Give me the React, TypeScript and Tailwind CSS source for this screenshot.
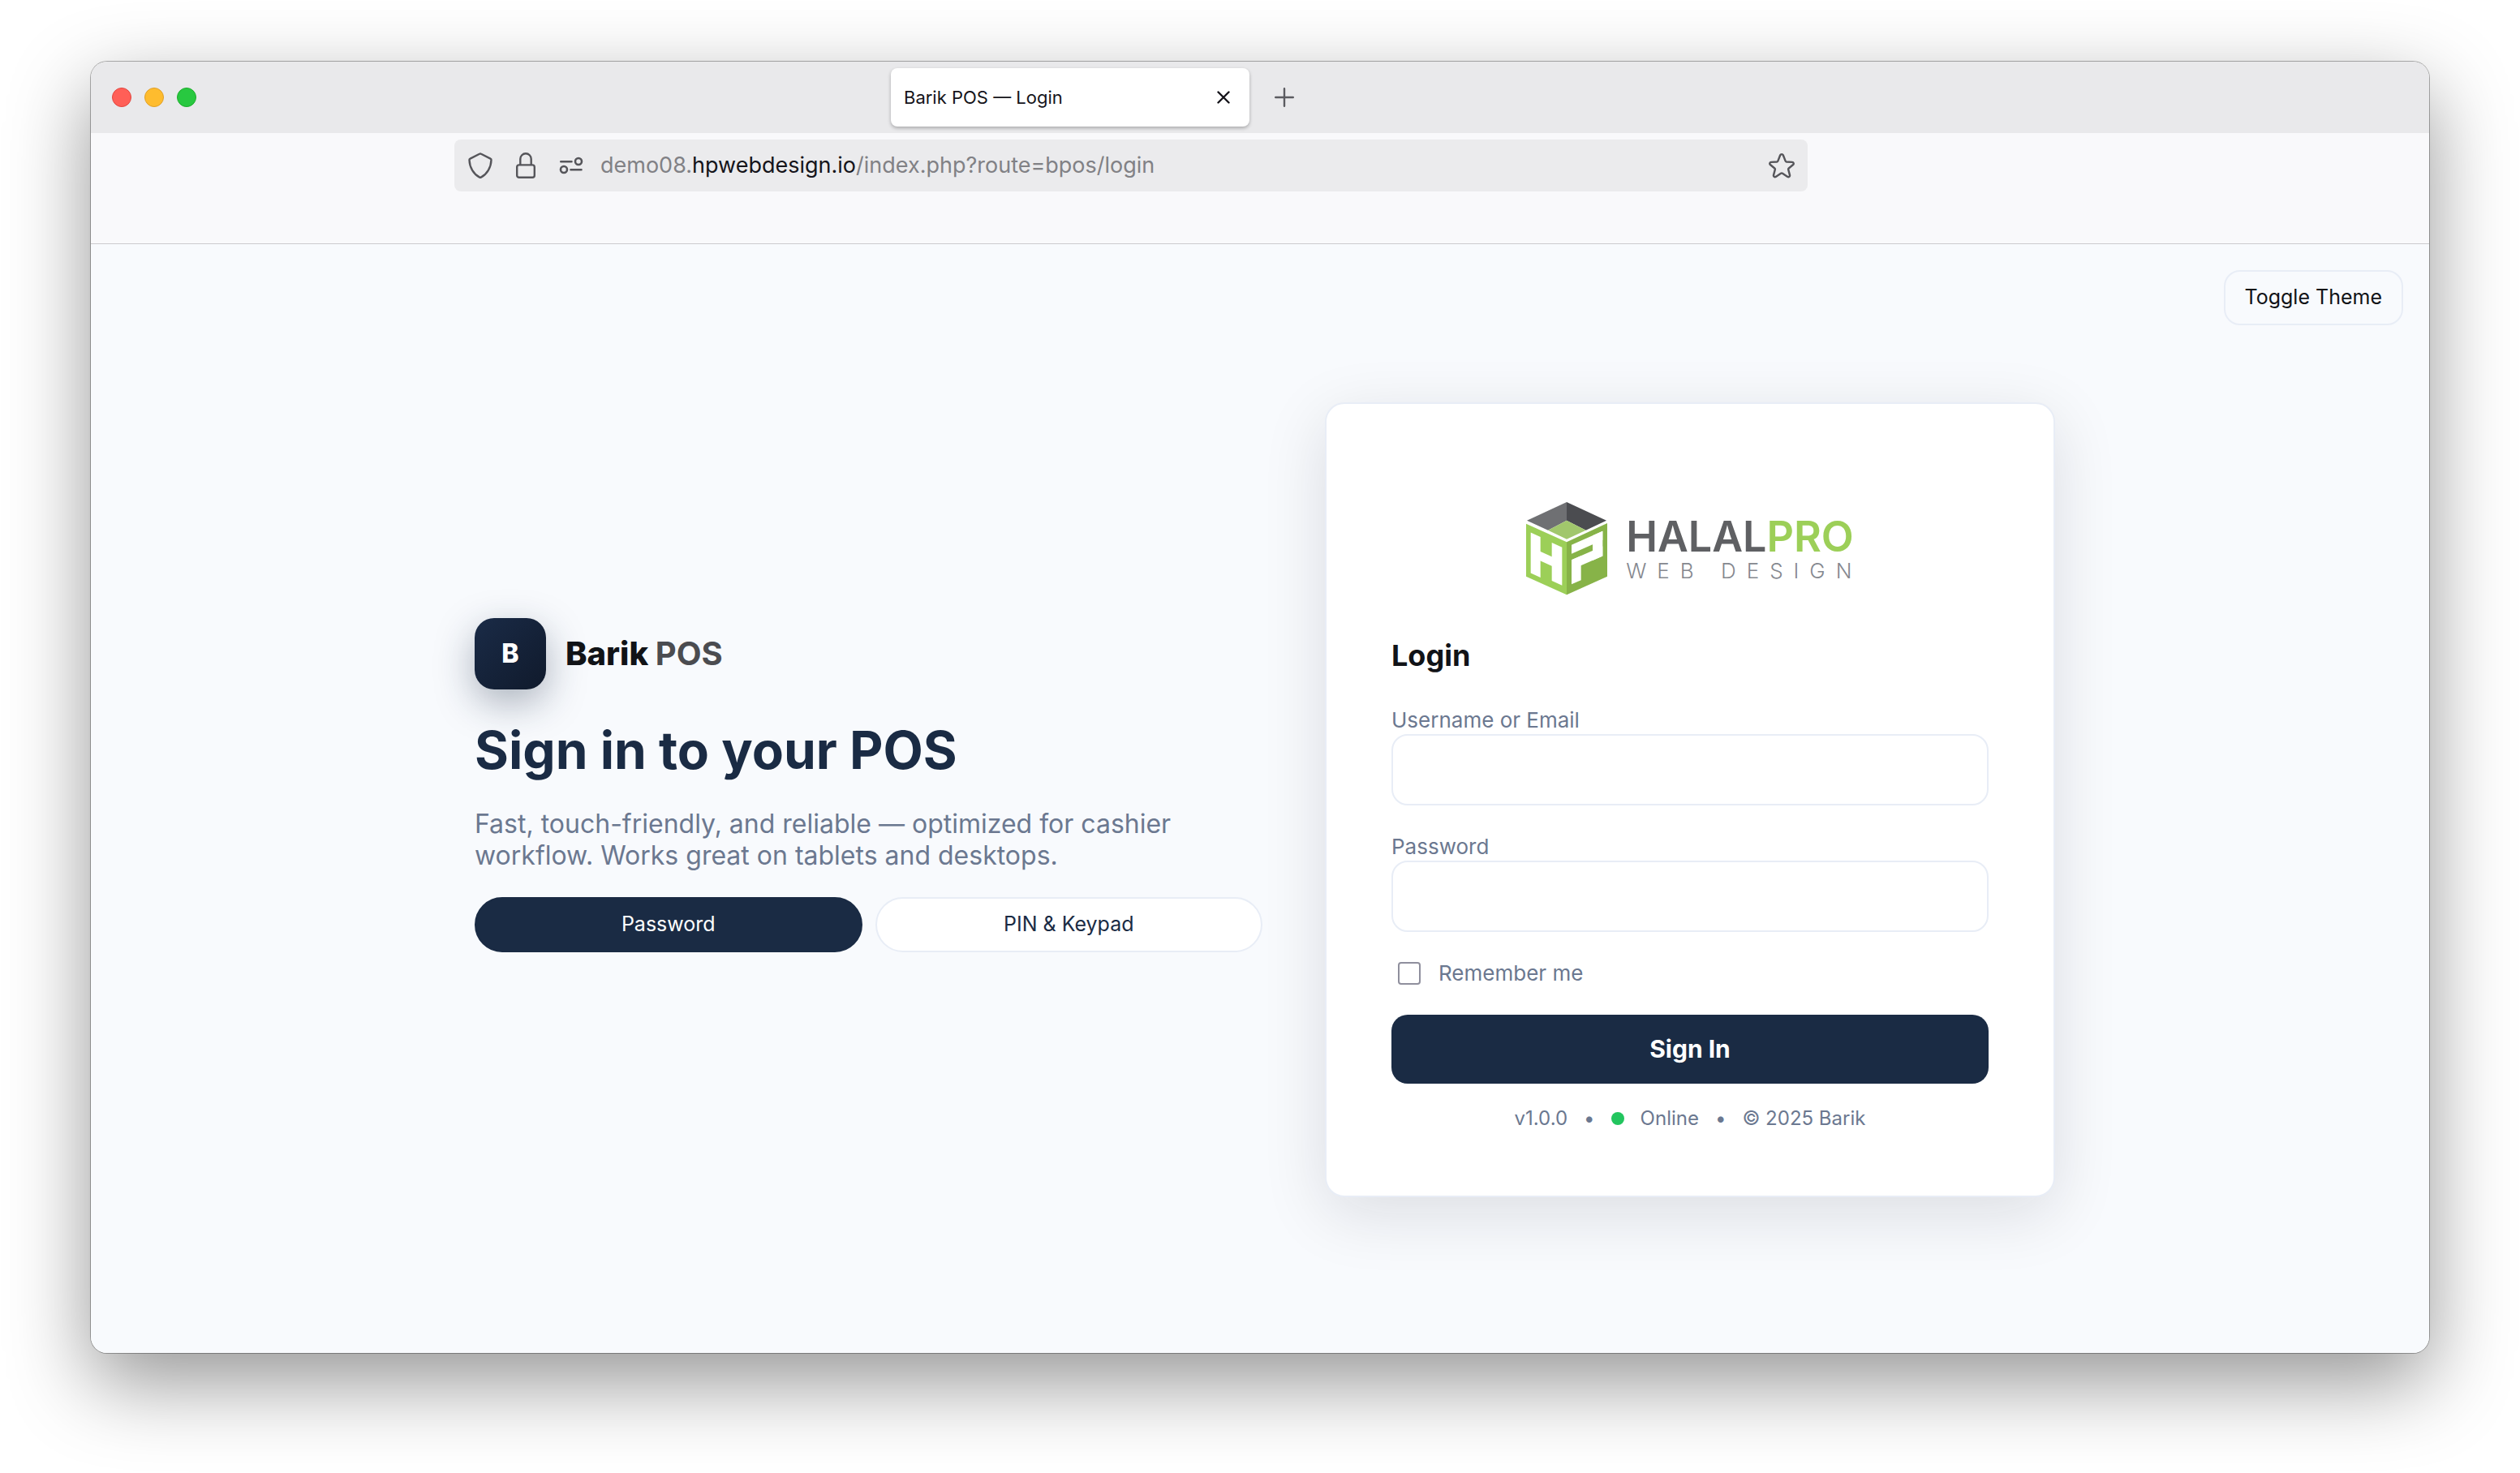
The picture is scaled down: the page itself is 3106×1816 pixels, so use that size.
import React, { useState } from "react";

function ShieldIcon() {
  return (
    <svg className="size-8 shrink-0" viewBox="0 0 32 32" fill="none" stroke="#55555a" strokeWidth="2.4" strokeLinejoin="round" aria-hidden="true">
      <path d="M15 1.800a2 2 0 0 1 2 0L28.500 7.600a1.600 1.600 0 0 1 1 1.600C29.200 18.500 24.300 26.500 17.200 30.400a2.400 2.400 0 0 1-2.400 0C7.700 26.500 2.800 18.500 2.500 9.200a1.600 1.600 0 0 1 1-1.600Z" />
    </svg>
  );
}

function LockIcon() {
  return (
    <svg className="size-8 shrink-0" viewBox="0 0 32 32" fill="none" stroke="#55555a" strokeWidth="2.4" aria-hidden="true">
      <rect x="5.200" y="15.400" width="21.600" height="15.400" rx="2.600" />
      <path d="M9.300 15.400V8a6.700 6.700 0 0 1 13.400 0v7.400" />
    </svg>
  );
}

function PermissionsIcon() {
  return (
    <svg className="size-8 shrink-0" viewBox="0 0 32 32" fill="none" stroke="#55555a" strokeWidth="2.600" strokeLinecap="round" aria-hidden="true">
      <path d="M3.300 11.300H16.500M15.500 21.300h13" />
      <circle cx="25" cy="11" r="4" />
      <circle cx="7" cy="21" r="4" />
    </svg>
  );
}

function StarIcon() {
  return (
    <svg className="size-8 shrink-0" viewBox="0 0 32 32" fill="none" stroke="#55555a" strokeWidth="2.400" strokeLinejoin="round" aria-hidden="true">
      <path d="M14.200 3.200c.6-1.500 3-1.500 3.600 0l2.900 7.400c.2.500.7.800 1.200.9l7.100.4c1.700.1 2.300 2 1.100 3.100l-5.400 4.500c-.5.400-.7 1-.5 1.600l1.800 6.800c.4 1.600-1.300 2.800-2.700 2l-6.300-4.100a1.900 1.900 0 0 0-2 0L8.700 29.900c-1.400.8-3.100-.4-2.700-2l1.800-6.800c.2-.6 0-1.200-.5-1.600L1.900 15c-1.200-1.100-.6-3 1.100-3.100l7.100-.4c.5-.1 1-.4 1.200-.9Z" />
    </svg>
  );
}

function CubeLogo() {
  return (
    <svg className="h-[115px] w-[101px] shrink-0" viewBox="69 57 303 345" aria-hidden="true">
      <path d="M219 57 72 125l78 36 69-36Z" fill="#6f7073" />
      <path d="M219 57l147 68-76 36-71-36Z" fill="#4b4c50" />
      <path d="M219 125l71 36-71 33-69-33Z" fill="#a1c76c" />
      <path d="M69 137l150 68v195L69 332Z" fill="#9ccf58" />
      <path d="M369 135l-150 70v195l150-68Z" fill="#87b348" />
      <g fill="#fff" transform="matrix(1 .453 0 1 69 137)">
        <rect x="17" y="25" width="36" height="150" />
        <rect x="95" y="27" width="38" height="141" />
        <rect x="50" y="79" width="48" height="34" />
      </g>
      <g fill="#fff" transform="matrix(1 -.44 0 1 219 205)">
        <rect x="18" y="18" width="115" height="33" />
        <rect x="96" y="18" width="37" height="92" />
        <rect x="18" y="74" width="115" height="36" />
        <rect x="18" y="74" width="35" height="90" />
      </g>
    </svg>
  );
}

function TitleBar() {
  return (
    <div className="flex h-[88px] items-center bg-[#e9e9eb] pl-[26px]">
      <div className="flex gap-4">
        <button aria-label="Close window" className="size-6 rounded-full border border-[#e2463f] bg-[#ff5f57]" />
        <button aria-label="Minimize window" className="size-6 rounded-full border border-[#e0a028] bg-[#febc2e]" />
        <button aria-label="Zoom window" className="size-6 rounded-full border border-[#1dad2b] bg-[#28c840]" />
      </div>
      <div className="ml-[856px] flex h-[72px] w-[442px] items-center justify-between rounded-lg bg-white pr-6 pl-4 shadow-[0_2px_4px_rgba(0,0,0,0.28)]">
        <span className="text-[22px] leading-7 text-[#15141a]">Barik POS — Login</span>
        <button aria-label="Close tab" className="flex">
          <svg className="size-4" viewBox="0 0 16 16" stroke="#15141a" strokeWidth="2.400" strokeLinecap="round" aria-hidden="true">
            <path d="M1.500 1.500l13 13M14.500 1.500l-13 13" />
          </svg>
        </button>
      </div>
      <button aria-label="New tab" className="ml-[31px] flex">
        <svg className="size-6" viewBox="0 0 24 24" stroke="#5b5b60" strokeWidth="2.400" strokeLinecap="round" aria-hidden="true">
          <path d="M12 1.200v21.600M1.200 12h21.600" />
        </svg>
      </button>
    </div>
  );
}

function AddressBar() {
  return (
    <div className="flex border-b border-[#cbcbce] bg-[#f9f9fb] pt-2 pb-16">
      <div className="mr-[766px] ml-[448px] flex h-16 flex-1 items-center rounded-lg bg-[#ebebed] px-4">
        <div className="flex gap-6">
          <ShieldIcon />
          <LockIcon />
          <PermissionsIcon />
        </div>
        <div className="ml-5 flex-1 text-[27px] leading-8 text-[#818185]">
          demo08.<span className="text-[#15141a]">hpwebdesign.io</span>/index.php?route=bpos/login
        </div>
        <button aria-label="Bookmark this page" className="flex">
          <StarIcon />
        </button>
      </div>
    </div>
  );
}

type Mode = "password" | "pin";

function Intro() {
  const [mode, setMode] = useState<Mode>("password");
  const on = "h-[68px] rounded-full border-2 border-[#1a2b44] bg-[#1a2b44] text-[25px] text-white";
  const off = "h-[68px] rounded-full border-2 border-[#e8edf6] bg-white text-[25px] text-[#1a2b44]";
  return (
    <section className="pb-9">
      <div className="flex items-center gap-6">
        <div className="flex size-[88px] items-center justify-center rounded-3xl bg-linear-135 from-[#1a2b47] to-[#101a2c] text-[32px] font-extrabold text-white shadow-[0_16px_48px_rgba(26,43,68,0.35)]">
          B
        </div>
        <div className="text-[40px] leading-[48px] font-extrabold text-[#111317]">
          Barik <span className="font-bold text-[#4b4c50]">POS</span>
        </div>
      </div>
      <h1 className="mt-9 text-[64px] leading-[78px] font-bold text-[#1a2b44]">Sign in to your POS</h1>
      <p className="mt-8 text-[32px] leading-[39px] text-[#6b7890]">
        Fast, touch-friendly, and reliable — optimized for cashier workflow. Works great on tablets and desktops.
      </p>
      <div className="mt-8 grid grid-cols-2 gap-4">
        <button className={mode === "password" ? on : off} onClick={() => setMode("password")}>
          Password
        </button>
        <button className={mode === "pin" ? on : off} onClick={() => setMode("pin")}>
          PIN &amp; Keypad
        </button>
      </div>
    </section>
  );
}

function Field({ id, label, type }: { id: string; label: string; type: string }) {
  return (
    <div>
      <label htmlFor={id} className="block text-[26px] leading-[34px] text-[#6b7890]">
        {label}
      </label>
      <input id={id} type={type} className="block h-[88px] w-full rounded-[20px] border-2 border-[#e8edf6] bg-white px-6 text-[32px] outline-none" />
    </div>
  );
}

function LoginCard() {
  return (
    <form
      onSubmit={(e) => e.preventDefault()}
      className="rounded-3xl border-2 border-[#e8edf6] bg-white p-20 shadow-[0_20px_80px_rgba(15,20,35,0.12)]"
    >
      <div className="mt-[41px] flex justify-center gap-[22px]">
        <CubeLogo />
        <div className="pt-[17px] whitespace-nowrap">
          <div className="text-[52px] leading-[52px] font-semibold text-[#5f6063]">
            HALAL<span className="text-[#9ccf58]">PRO</span>
          </div>
          <div className="-mr-[13px] text-[26px] leading-[32px] font-light tracking-[0.5em] text-[#85888f]">WEB DESIGN</div>
        </div>
      </div>
      <h2 className="mt-[52px] text-[36px] leading-[44px] font-bold text-[#111317]">Login</h2>
      <div className="mt-[41px] flex flex-col gap-[34px]">
        <Field id="username" label="Username or Email" type="text" />
        <Field id="password" label="Password" type="password" />
        <div className="flex items-center gap-[22px] pl-2">
          <input id="remember" type="checkbox" className="size-7 appearance-none rounded-[4px] border-2 border-[#8f8f9d] bg-white checked:bg-[#1a2b44]" />
          <label htmlFor="remember" className="text-[26px] leading-[34px] text-[#6b7890]">
            Remember me
          </label>
        </div>
        <button type="submit" className="h-[85px] rounded-[20px] bg-[#1a2b44] text-[30px] font-bold text-white">
          Sign In
        </button>
      </div>
      <div className="mt-7 flex items-center justify-center gap-5 text-[24px] leading-[30px] text-[#6b7890]">
        <span>v1.0.0</span>
        <span>•</span>
        <span className="size-4 rounded-full bg-[#22c55e]" />
        <span>Online</span>
        <span>•</span>
        <span>© 2025 Barik</span>
      </div>
    </form>
  );
}

export default function App() {
  return (
    <div className="flex min-h-screen flex-col bg-white px-28 pt-19 pb-37 font-['Inter',sans-serif]">
      <div className="flex flex-1 flex-col overflow-hidden rounded-[20px] shadow-[0_0_0_1px_rgba(0,0,0,0.3),0_36px_100px_rgba(0,0,0,0.42)]">
        <TitleBar />
        <AddressBar />
        <main className="flex flex-1 flex-col bg-[#f8fafd]">
          <div className="flex justify-end px-8 pt-8">
            <button className="h-[68px] rounded-[20px] border-2 border-[#e8edf6] px-6 text-[25px] text-[#111317]">Toggle Theme</button>
          </div>
          <div className="flex flex-1 items-center justify-center pb-[98px] pl-3">
            <div className="grid w-full max-w-[1948px] grid-cols-[1fr_900px] items-center gap-[77px]">
              <Intro />
              <LoginCard />
            </div>
          </div>
        </main>
      </div>
    </div>
  );
}
